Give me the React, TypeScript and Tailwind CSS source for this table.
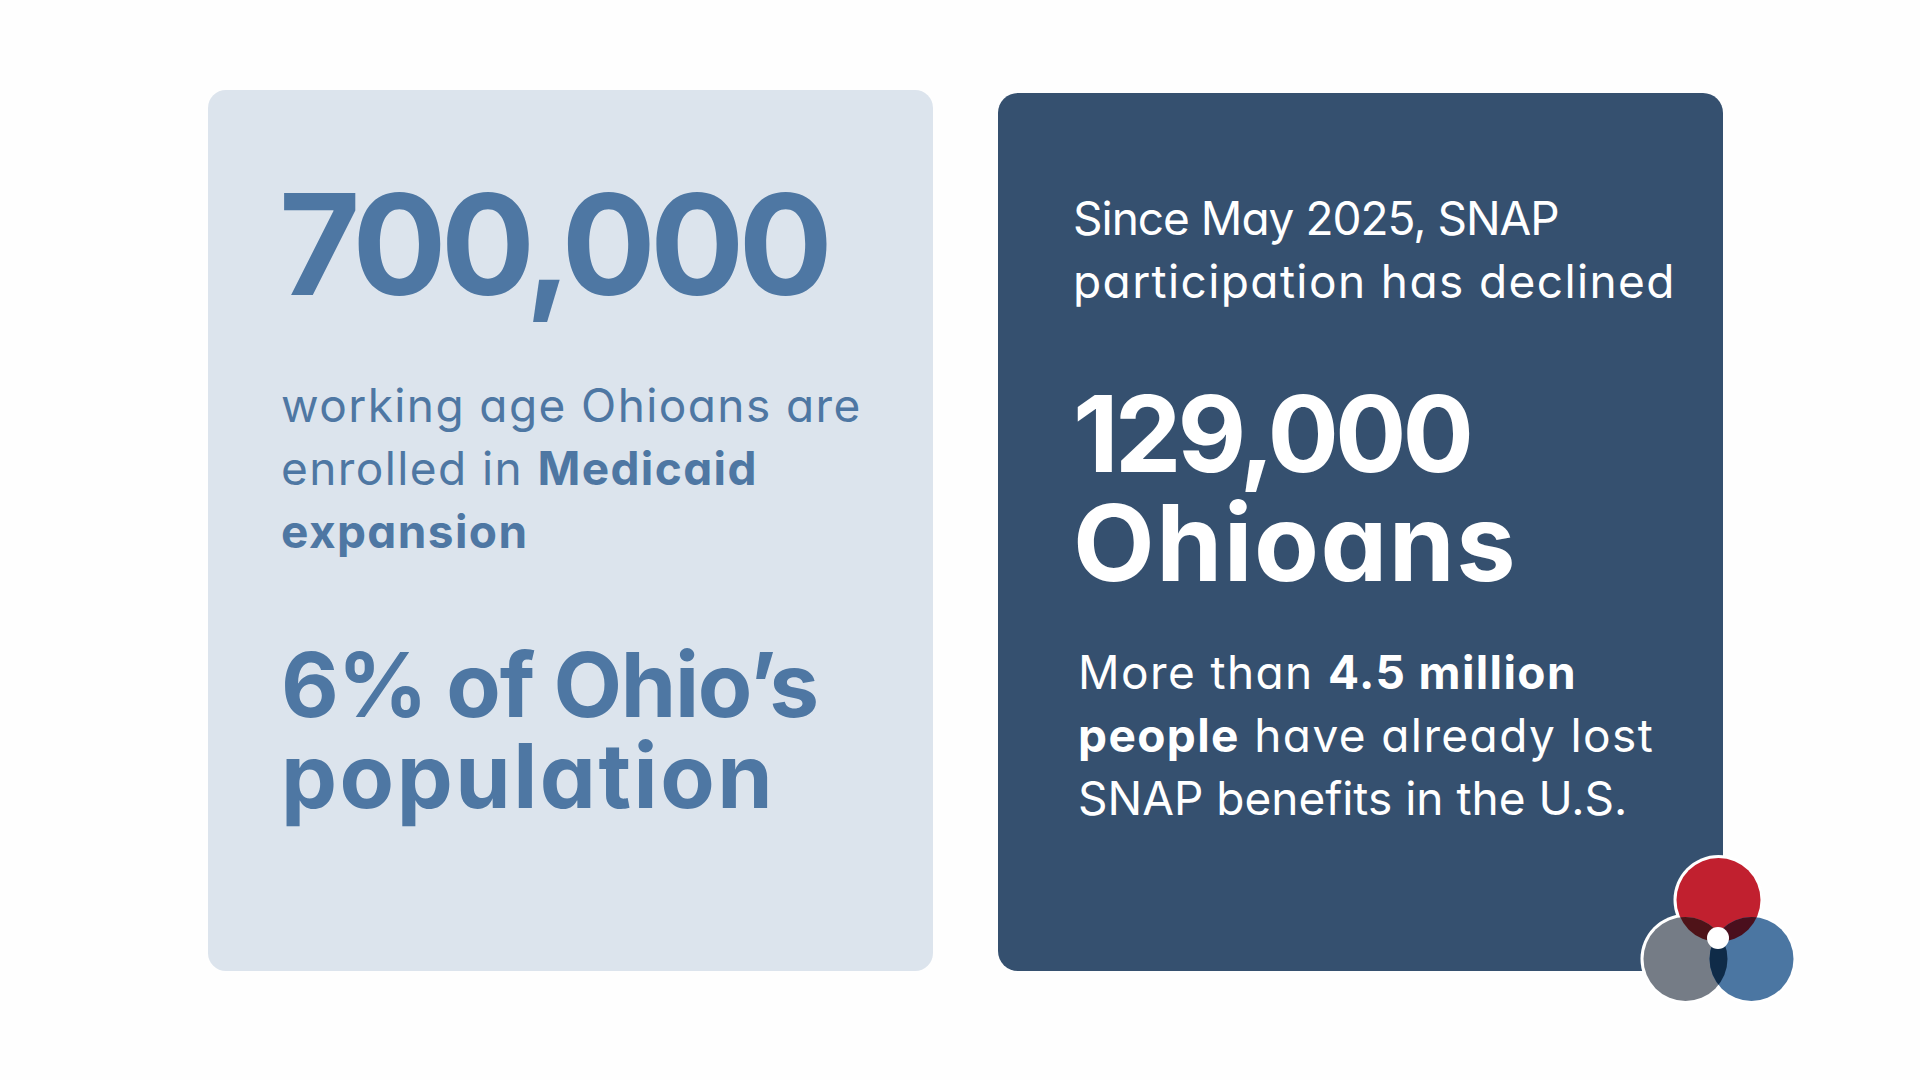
import React from 'react';

const font = "font-['Inter','Liberation_Sans',sans-serif] [font-feature-settings:'cv11']";

function Logo() {
  // three overlapping circles, drawn in the badge's own coordinates
  return (
    <svg
      className="absolute left-[642px] top-[759px] h-[155px] w-[160px]"
      viewBox="0 0 160 155"
      aria-hidden
    >
      <defs>
        <clipPath id="clip-red">
          <circle cx="78.5" cy="48" r="42" />
        </clipPath>
        <clipPath id="clip-gray">
          <circle cx="45.5" cy="107" r="42" />
        </clipPath>
      </defs>
      <g fill="#ffffff">
        <circle cx="78.5" cy="48" r="45" />
        <circle cx="45.5" cy="107" r="45" />
        <circle cx="111.5" cy="107" r="45" />
      </g>
      <circle cx="78.5" cy="48" r="42" fill="#c1202f" />
      <circle cx="45.5" cy="107" r="42" fill="#757c86" />
      <circle cx="111.5" cy="107" r="42" fill="#4b76a2" />
      <circle cx="45.5" cy="107" r="42" fill="#4f1318" clipPath="url(#clip-red)" />
      <circle cx="111.5" cy="107" r="42" fill="#4a0f1d" clipPath="url(#clip-red)" />
      <circle cx="111.5" cy="107" r="42" fill="#0f2b48" clipPath="url(#clip-gray)" />
      <circle cx="78" cy="86" r="11" fill="#ffffff" />
    </svg>
  );
}

export default function App() {
  return (
    <div className={`min-h-screen w-full bg-[#fefefe] ${font}`}>
      <div className="flex items-end gap-[65px] pl-[208px] pt-[90px]">
        {/* Medicaid card */}
        <div className="h-[881px] w-[725px] rounded-[18px] bg-[#dce4ed] pl-[73px] pt-[84px] text-[#4e77a3]">
          <div className="-ml-[2px] text-[140px] font-bold leading-[140px] tracking-[-6px]">700,000</div>
          <p className="mt-[60px] text-[46px] font-normal leading-[63px] tracking-[1.4px]">
            working age Ohioans are
            <br />
            enrolled in <span className="font-bold">Medicaid</span>
            <br />
            <span className="font-bold">expansion</span>
          </p>
          <p className="mt-[76px] text-[89px] font-bold leading-[91px]">
            <span className="block tracking-[-1.3px]">6% of Ohio’s</span>
            <span className="block tracking-[2.5px]">population</span>
          </p>
        </div>

        {/* SNAP card */}
        <div className="relative h-[878px] w-[725px] rounded-[20px] bg-[#35506f] pl-[75px] pt-[94px] text-white">
          <p className="text-[46px] font-normal leading-[63px]">
            <span className="block tracking-[-1px]">Since May 2025, SNAP</span>
            <span className="block tracking-[1.4px]">participation has declined</span>
          </p>
          <p className="mt-[66px] text-[106px] font-bold leading-[109px]">
            <span className="block tracking-[-4px]">129,000</span>
            <span className="block tracking-[1.5px]">Ohioans</span>
          </p>
          <p className="mt-[44px] pl-[5px] text-[46px] font-normal leading-[63px]">
            <span className="block tracking-[1.4px]">
              More than <span className="font-bold">4.5 million</span>
            </span>
            <span className="block tracking-[1.4px]">
              <span className="font-bold">people</span> have already lost
            </span>
            <span className="block tracking-[0px]">SNAP benefits in the U.S.</span>
          </p>
          <Logo />
        </div>
      </div>
    </div>
  );
}
